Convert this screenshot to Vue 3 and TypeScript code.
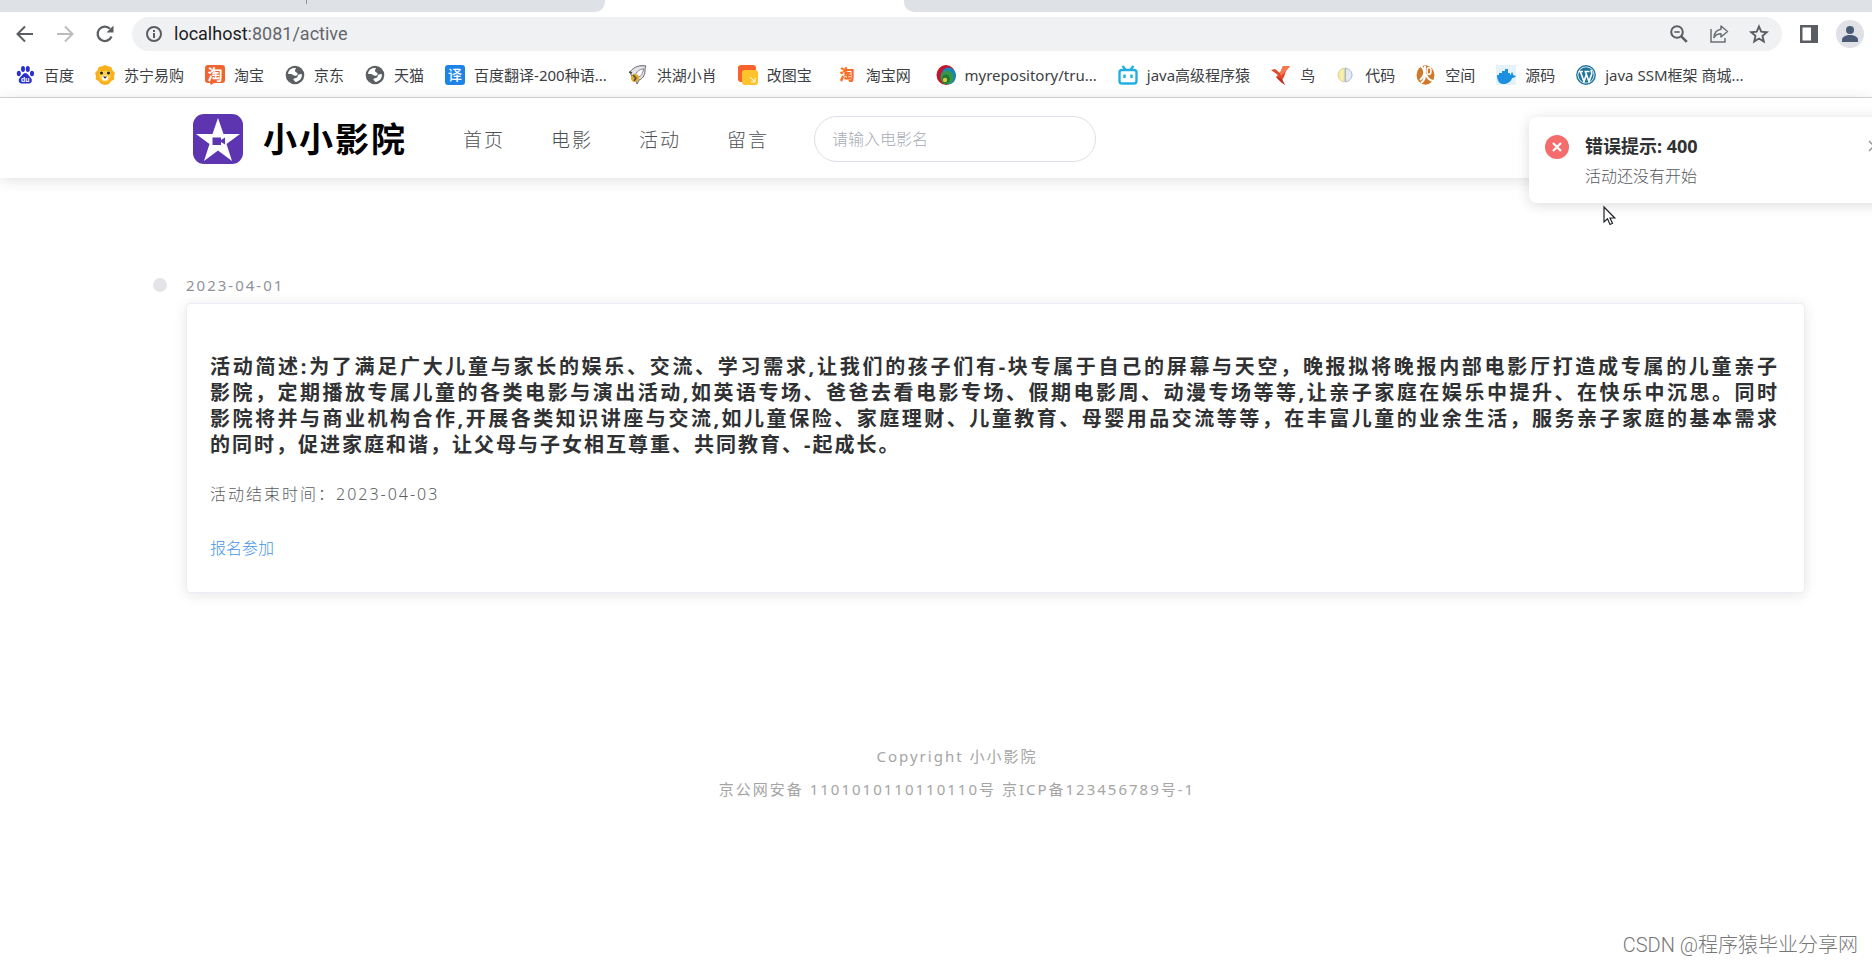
<script setup lang="ts">
import { ref } from 'vue'

interface Bookmark {
  icon: string
  label: string
}

const bookmarks: Bookmark[] = [
  { icon: 'paw', label: '百度' },
  { icon: 'lion', label: '苏宁易购' },
  { icon: 'taobao', label: '淘宝' },
  { icon: 'globe', label: '京东' },
  { icon: 'globe', label: '天猫' },
  { icon: 'translate', label: '百度翻译-200种语...' },
  { icon: 'bird', label: '洪湖小肖' },
  { icon: 'image', label: '改图宝\u00a0' },
  { icon: 'tao', label: '淘宝网\u00a0' },
  { icon: 'rings', label: 'myrepository/tru...' },
  { icon: 'tv', label: 'java高级程序猿' },
  { icon: 'origami', label: '鸟' },
  { icon: 'halves', label: '代码' },
  { icon: 'swirl', label: '空间' },
  { icon: 'whale', label: '源码' },
  { icon: 'press', label: 'java SSM框架 商城...' },
]

const navItems: string[] = ['首页', '电影', '活动', '留言']

const summary: string[] = [
  '活动简述:为了满足广大儿童与家长的娱乐、交流、学习需求,让我们的孩子们有-块专属于自己的屏幕与天空，晚报拟将晚报内部电影厅打造成专属的儿童亲子',
  '影院，定期播放专属儿童的各类电影与演出活动,如英语专场、爸爸去看电影专场、假期电影周、动漫专场等等,让亲子家庭在娱乐中提升、在快乐中沉思。同时',
  '影院将并与商业机构合作,开展各类知识讲座与交流,如儿童保险、家庭理财、儿童教育、母婴用品交流等等，在丰富儿童的业余生活，服务亲子家庭的基本需求',
  '的同时，促进家庭和谐，让父母与子女相互尊重、共同教育、-起成长。',
]

const address = ref('localhost:8081/active')
const keyword = ref('')
const noticeOpen = ref(true)
</script>

<template>
  <div class="window">
    <div class="tabs">
      <div class="tab-left"><span class="tab-mark"></span></div>
      <div class="tab-active"></div>
      <div class="tab-right"></div>
    </div>

    <div class="toolbar">
      <button class="tool" aria-label="后退">
        <svg width="20" height="20" viewBox="0 0 20 20" fill="none" stroke="#5a5e63" stroke-width="2"><path d="M18 10H3M10 2.500L2.500 10L10 17.500" /></svg>
      </button>
      <button class="tool" aria-label="前进">
        <svg width="20" height="20" viewBox="0 0 20 20" fill="none" stroke="#babcbe" stroke-width="2"><path d="M2 10h15M10 2.500L17.500 10L10 17.500" /></svg>
      </button>
      <button class="tool" aria-label="重新加载">
        <svg width="20" height="20" viewBox="0 0 20 20" fill="none" stroke="#5a5e63" stroke-width="2.200"><path d="M16.500 12.500A7.200 7.200 0 1 1 15 4.800" /><path d="M18.500 1.500v7h-7z" fill="#5a5e63" stroke="none" /></svg>
      </button>
      <div class="omnibox">
        <svg width="18" height="18" viewBox="0 0 18 18" fill="none" stroke="#5a5e63" stroke-width="2"><circle cx="9" cy="9" r="7" /><path d="M9 8v5M9 5v2" /></svg>
        <label class="address">
          <span class="host">localhost</span><span>:8081/active</span>
          <input v-model="address" class="address-input" aria-label="地址栏" />
        </label>
        <div class="omni-actions">
          <button class="tool" aria-label="缩放">
            <svg width="20" height="20" viewBox="0 0 20 20" fill="none" stroke="#5a5e63" stroke-width="2"><circle cx="8" cy="8" r="5.800" /><path d="M12.300 12.300l5.500 5.500" stroke-width="2.600" /><path d="M5.300 8h5.400" stroke-width="1.600" /></svg>
          </button>
          <button class="tool" aria-label="分享">
            <svg width="20" height="20" viewBox="0 0 20 20" fill="none" stroke="#6b6f74" stroke-width="1.500"><path d="M2 5v13h14v-4" /><path d="M12 2l6.500 5.500L12 13v-3.200c-3.500 0-5.500 1.200-7 3.700c.3-5 3-7.700 7-8.200z" stroke-linejoin="round" /></svg>
          </button>
          <button class="tool" aria-label="收藏">
            <svg width="20" height="20" viewBox="0 0 20 20" fill="none" stroke="#5a5e63" stroke-width="1.900"><path d="M10 2.500l2.200 5.200 5.600.5-4.300 3.700 1.300 5.500L10 14.500l-4.800 2.900 1.300-5.500L2.200 8.200l5.600-.5z" /></svg>
          </button>
        </div>
      </div>
      <div class="side">
        <button class="tool" aria-label="侧边栏">
          <svg width="20" height="20" viewBox="0 0 20 20"><path fill="#5a5e63" fill-rule="evenodd" d="M1 1h18v18H1zM3.500 3.500v13H12v-13z" /></svg>
        </button>
        <button class="tool" aria-label="用户">
          <svg width="28" height="28" viewBox="0 0 28 28"><circle cx="14" cy="14" r="14" fill="#dfe1e6" /><circle cx="14" cy="10" r="4" fill="#4a5a75" /><path d="M6 22v-2c0-3.500 4-5 8-5s8 1.500 8 5v2z" fill="#4a5a75" /></svg>
        </button>
      </div>
    </div>

    <nav class="bookmarks" aria-label="书签">
      <a v-for="b in bookmarks" :key="b.label" href="#" class="bookmark">
        <svg width="20" height="20" viewBox="0 0 20 20">
          <g v-if="b.icon === 'paw'" fill="#2a2fd0">
            <ellipse cx="3.800" cy="8.500" rx="2" ry="2.800" /><ellipse cx="8" cy="4" rx="2" ry="2.900" /><ellipse cx="12.800" cy="4" rx="2" ry="2.900" /><ellipse cx="17" cy="8.500" rx="2" ry="2.800" />
            <path d="M10.300 8c-2.300 0-3 2.400-4.800 4-1.800 1.600-2.300 3.500-1.200 5.200 1.300 2 3.700 1.200 6 1.200s4.700.8 6-1.200c1.100-1.700.5-3.600-1.200-5.200C13.300 10.400 12.700 8 10.300 8z" />
            <text x="10.300" y="17" font-size="7" font-weight="700" text-anchor="middle" fill="#fff" font-family="Liberation Sans">du</text>
          </g>
          <g v-else-if="b.icon === 'lion'">
            <path fill="#f8b01c" d="M10 0l3 1.300 3.300.6 1 3.200L20 8l-1 3 .3 3.500-3 1.600L14 19l-4 1-4-1-2.300-2.900-3-1.600L1 11 0 8l2.700-2.900 1-3.200L7 1.300z" />
            <path fill="#ffd04a" d="M4.500 6h11v6.500l-3 4h-5l-3-4z" /><circle cx="6.500" cy="8" r="1.500" fill="#20242a" /><circle cx="13.500" cy="8" r="1.500" fill="#20242a" /><ellipse cx="10" cy="13" rx="3" ry="2.500" fill="#fff" /><path d="M8 11.500h4l-2 2.200z" fill="#20242a" />
          </g>
          <g v-else-if="b.icon === 'taobao'">
            <path fill="#f0642f" d="M3 0h14a3 3 0 0 1 3 3v12a3 3 0 0 1-3 3H9l-3 2-1-2H3a3 3 0 0 1-3-3V3a3 3 0 0 1 3-3z" />
            <text x="10" y="15" font-size="15" font-weight="700" text-anchor="middle" fill="#fff" font-family="Noto Sans CJK SC">淘</text>
          </g>
          <g v-else-if="b.icon === 'globe'">
            <circle cx="10" cy="10" r="9.300" fill="#5c6065" />
            <path fill="#fff" d="M3 8c1-3.500 4-5.500 8-5-.3 1.700-1.300 1.300-1 3 .2 1.300 2 1.200 2.500 2.500.5 1.500-.8 2.500-2.500 2.200C7.500 10.500 8 9 5.500 9 4 9 3 9 3 8zM17 9.500c.2 3.500-2.500 7-6.500 7.500-.7-1.300-2.500-1.700-2-3 .4-1.200 2.500-.5 3.500-1.500s.3-2 1.700-3c1-.7 2.500-.7 3.300 0z" />
          </g>
          <g v-else-if="b.icon === 'translate'">
            <rect width="20" height="20" rx="3" fill="#1e83e6" />
            <text x="10" y="15" font-size="14" font-weight="500" text-anchor="middle" fill="#fff" font-family="Noto Sans CJK SC">译</text>
          </g>
          <g v-else-if="b.icon === 'bird'">
            <path d="M2 7c4-6 11-7 16-6-1 1-1 3-1 5 0 5-3 8-6 9l-2 4-1-4-4-3z" fill="#e4e3e8" stroke="#68646c" />
            <path d="M7 10c3-5 6-6 9-6-2 3-1 6-5 8" fill="#fff" stroke="#8b7b8e" /><circle cx="7" cy="13" r="4" fill="#e0ae28" /><path d="M5 10l3 3-2 3M1 7l3 1" stroke="#4d4a48" stroke-width="1.500" fill="none" />
          </g>
          <g v-else-if="b.icon === 'image'">
            <rect width="18" height="17" rx="3" fill="#fb622b" /><rect x="4" y="5" width="16" height="15" rx="3" fill="#fec32b" /><path d="M12 12l5 5m0-4v4h-4" stroke="#fff" fill="none" />
          </g>
          <text v-else-if="b.icon === 'tao'" x="10" y="15" font-size="15" font-weight="900" text-anchor="middle" fill="#fa6d25" font-family="Noto Sans CJK SC">淘</text>
          <g v-else-if="b.icon === 'rings'">
            <ellipse cx="10" cy="10" rx="9.500" ry="10" fill="#c2152f" /><ellipse cx="12.500" cy="11" rx="7.500" ry="8.500" fill="#1585c0" /><ellipse cx="11" cy="12.500" rx="6.500" ry="7" fill="#38964a" /><ellipse cx="10" cy="14" rx="4" ry="4.500" fill="#207a35" /><circle cx="9" cy="15" r="2.200" fill="#d5cf35" />
          </g>
          <g v-else-if="b.icon === 'tv'" fill="none" stroke="#23aee0" stroke-width="2.400">
            <rect x="1.500" y="5" width="17" height="13.500" rx="2.500" /><path d="M4.500 1l3 3.500M15.500 1l-3 3.500M6.500 9.500v3.500M13.500 9.500v3.500" />
          </g>
          <g v-else-if="b.icon === 'origami'">
            <path fill="#e34a2c" d="M0 5l4-1 5 4 3-7h7l-4 5-2 6-2 3 3 5-4-3-5-5 2-2z" /><path fill="#f77853" d="M9 8l3-7h7l-4 5-5 5z" /><path fill="#b92f20" d="M5 12l6 2 3 6-4-3z" />
          </g>
          <g v-else-if="b.icon === 'halves'">
            <path fill="#f3eaa6" stroke="#ddd391" d="M8.500 3C4 4 2 7 2 10s2 6 6.500 7z" /><path fill="#e3e8f4" stroke="#a9b6d6" d="M9.500 3C14 4 16 7 16 10s-2 6-6.500 7z" /><path d="M6 5v10" stroke="#fff9c8" />
          </g>
          <g v-else-if="b.icon === 'swirl'">
            <ellipse cx="9.500" cy="10" rx="9" ry="9.700" fill="#cf7a2b" />
            <path d="M5 1c4 3 5 9-1 14M9 1v9c0 4-1 6-4 8M10 9c1 4 3 6 7 7" fill="none" stroke="#fff" stroke-width="2" /><ellipse cx="13" cy="6" rx="2" ry="3.500" fill="none" stroke="#fff" stroke-width="1.500" />
          </g>
          <g v-else-if="b.icon === 'whale'">
            <rect width="20" height="20" fill="#e5f2fb" /><path fill="#1c8fe0" d="M1 10h2V8h3V6h3V4h3v4h2v2c1 0 1-2 2-3 1 1 1 2 1 3l3 1c-1 1-2 2-4 2-1 4-5 6-9 6s-6-4-6-9z" />
          </g>
          <g v-else>
            <circle cx="10" cy="10" r="9.200" fill="#fff" stroke="#21759b" stroke-width="1.400" /><circle cx="10" cy="10" r="7.700" fill="#21759b" />
            <path d="M3 6.500h4M8.500 6.500h5M4.500 7l3.500 9.500L10.500 9M9.500 7l3.500 9.500L15.700 9c.5-2-1-2.500-.5-4" fill="none" stroke="#fff" stroke-width="1.600" />
          </g>
        </svg>
        <span>{{ b.label }}</span>
      </a>
    </nav>

    <div class="page">
      <header class="header">
        <svg class="logo" width="50" height="50" viewBox="0 0 50 50">
          <rect width="50" height="50" rx="11" fill="#5d35b1" />
          <path fill="#fff" d="M25 4l5.500 16H47L33.500 30l5.500 17-14-10.500L11 47l5.500-17L3 20h16.500z" />
          <path fill="#5d35b1" d="M19.500 23.500h8.500v2.500l4-2.500v7l-4-2.500v3h-8.500z" />
        </svg>
        <h1 class="brand">小小影院</h1>
        <nav class="nav" aria-label="主导航">
          <a v-for="item in navItems" :key="item" href="#">{{ item }}</a>
        </nav>
        <input v-model="keyword" class="search" type="text" placeholder="请输入电影名" aria-label="请输入电影名" />
      </header>

      <main class="timeline">
        <span class="dot"></span>
        <article class="entry">
          <time class="stamp" datetime="2023-04-01">2023-04-01</time>
          <section class="card">
            <h3 class="summary">
              <span v-for="line in summary" :key="line" class="line">{{ line }}</span>
            </h3>
            <p class="until">活动结束时间：2023-04-03</p>
            <button class="join">报名参加</button>
          </section>
        </article>
      </main>

      <footer class="footer">
        <p>Copyright 小小影院</p>
        <p>京公网安备 1101010110110110号 京ICP备123456789号-1</p>
      </footer>

      <div v-if="noticeOpen" class="notice" role="alert">
        <svg class="notice-icon" width="24" height="24" viewBox="0 0 24 24"><circle cx="12" cy="12" r="12" fill="#f56c6c" /><path d="M8 8l8 8M16 8l-8 8" stroke="#fff" stroke-width="2.200" /></svg>
        <div class="notice-body">
          <h2>错误提示: 400</h2>
          <p>活动还没有开始</p>
        </div>
        <button class="close" aria-label="关闭" @click="noticeOpen = false">
          <svg width="12" height="12" viewBox="0 0 12 12"><path d="M1 1l10 10M11 1L1 11" stroke="#909399" stroke-width="1.500" /></svg>
        </button>
      </div>

      <svg class="cursor" width="14" height="20" viewBox="0 0 14 20"><path d="M1 1v15l3.500-3.200L7 18.500l2.500-1.200L7 12h4.800z" fill="#fff" stroke="#20222c" stroke-width="1.200" /></svg>
      <div class="watermark">CSDN @程序猿毕业分享网</div>
    </div>
  </div>
</template>

<style>
body {
  margin: 0;
  background: #fff;
}
</style>

<style scoped>
.window {
  display: flex;
  flex-direction: column;
  min-height: 100vh;
  overflow: hidden;
  background: #fff;
  font-family: "Noto Sans", "Noto Sans CJK SC", sans-serif;
}
button {
  padding: 0;
  border: 0;
  background: none;
  font-family: inherit;
  cursor: pointer;
}
a {
  color: inherit;
  text-decoration: none;
}
h1, h2, h3, p {
  margin: 0;
}
svg {
  display: block;
  flex: none;
  overflow: visible;
}

.tabs {
  display: flex;
  height: 12px;
}
.tab-left {
  width: 605px;
  background: #dee1e6;
  border-bottom-right-radius: 10px;
}
.tab-mark {
  display: block;
  width: 1px;
  height: 4px;
  margin-left: 306px;
  background: #8d9196;
}
.tab-active {
  width: 299px;
}
.tab-right {
  flex: 1;
  background: #dee1e6;
  border-bottom-left-radius: 10px;
}

.toolbar {
  display: flex;
  align-items: center;
  gap: 20px;
  height: 44px;
  padding: 0 8px 0 15px;
}
.omnibox {
  display: flex;
  flex: 1;
  align-items: center;
  gap: 11px;
  height: 34px;
  margin: 0 -3px;
  padding: 0 13px;
  border-radius: 17px;
  background: #f0f1f3;
}
.address {
  position: relative;
  flex: 1;
  color: #63676c;
  font-size: 18px;
  line-height: 34px;
  font-family: Roboto, "Noto Sans CJK SC", sans-serif;
}
.host {
  color: #202124;
}
.address-input {
  position: absolute;
  inset: 0;
  width: 100%;
  border: 0;
  outline: 0;
  background: transparent;
  color: transparent;
  font: inherit;
}
.omni-actions {
  display: flex;
  gap: 20px;
}
.side {
  display: flex;
  align-items: center;
  gap: 17px;
}

.bookmarks {
  display: flex;
  align-items: center;
  gap: 21px;
  height: 37px;
  padding: 0 15px 4px;
  border-bottom: 1px solid #d5d6d8;
  color: #3c4043;
  font-size: 15px;
  line-height: 20px;
  white-space: nowrap;
}
.bookmark {
  display: flex;
  align-items: center;
  gap: 9px;
}

.page {
  position: relative;
  flex: 1;
}
.header {
  display: flex;
  align-items: center;
  box-sizing: border-box;
  height: 80px;
  padding: 2px 0 0 193px;
  box-shadow: 0 2px 14px rgba(0, 0, 0, 0.12);
}
.brand {
  margin-left: 20px;
  color: #000;
  font-size: 34px;
  line-height: 48px;
  letter-spacing: 2px;
}
.nav {
  display: flex;
  gap: 46px;
  margin-left: 56px;
  color: #4c4f55;
  font-size: 19px;
  font-weight: 300;
  letter-spacing: 2px;
}
.search {
  box-sizing: border-box;
  width: 282px;
  height: 46px;
  margin-left: 45px;
  padding: 0 17px;
  border: 1px solid #dcdfe6;
  border-radius: 23px;
  outline: 0;
  background: #fff;
  color: #606266;
  font-family: inherit;
  font-size: 16px;
  font-weight: 300;
}
.search::placeholder {
  color: #a8acb4;
  opacity: 1;
}

.timeline {
  display: flex;
  gap: 19px;
  padding: 96px 67px 0 153px;
}
.dot {
  flex: none;
  width: 14px;
  height: 14px;
  margin-top: 4px;
  border-radius: 50%;
  background: #e4e4ea;
}
.entry {
  flex: 1;
  min-width: 0;
}
.stamp {
  display: block;
  color: #909399;
  font-size: 15px;
  line-height: 22px;
  letter-spacing: 2px;
}
.card {
  margin-top: 7px;
  padding: 50px 25px 32px 23px;
  border: 1px solid #ebeef5;
  border-radius: 4px;
  background: #fff;
  box-shadow: 0 2px 14px rgba(0, 0, 0, 0.1);
}
.summary {
  color: #303133;
  font-size: 20px;
  line-height: 26px;
  letter-spacing: 2px;
}
.line {
  display: block;
  text-align: justify;
  text-align-last: justify;
}
.line:last-child {
  text-align-last: left;
}
.until {
  margin-top: 24px;
  color: #5b5e63;
  font-size: 16px;
  font-weight: 300;
  line-height: 24px;
  letter-spacing: 2px;
}
.join {
  display: block;
  margin-top: 30px;
  color: #4594ee;
  font-size: 16px;
  font-weight: 300;
  line-height: 24px;
}

.footer {
  padding: 147px 0 0 42px;
  color: #a5a5a5;
  font-size: 15px;
  line-height: 33px;
  letter-spacing: 2px;
  text-align: center;
}

.notice {
  position: absolute;
  top: 19px;
  right: -52px;
  z-index: 2;
  display: flex;
  gap: 16px;
  box-sizing: border-box;
  width: 395px;
  padding: 16px 44px 14px 16px;
  border-radius: 8px;
  background: #fff;
  box-shadow: 0 2px 14px rgba(0, 0, 0, 0.14);
}
.notice-icon {
  margin-top: 2px;
}
.notice-body {
  flex: 1;
}
.notice h2 {
  color: #303133;
  font-size: 18px;
  line-height: 26px;
}
.notice p {
  margin-top: 4px;
  color: #55585d;
  font-size: 16px;
  font-weight: 300;
  line-height: 26px;
}
.close {
  align-self: flex-start;
  margin-top: 7px;
}
.cursor {
  position: absolute;
  top: 108px;
  right: 255px;
}
.watermark {
  position: absolute;
  right: 14px;
  bottom: 5px;
  color: #777;
  font-family: Roboto, "Noto Sans CJK SC", sans-serif;
  font-size: 20px;
  font-weight: 300;
  line-height: 28px;
}
</style>
